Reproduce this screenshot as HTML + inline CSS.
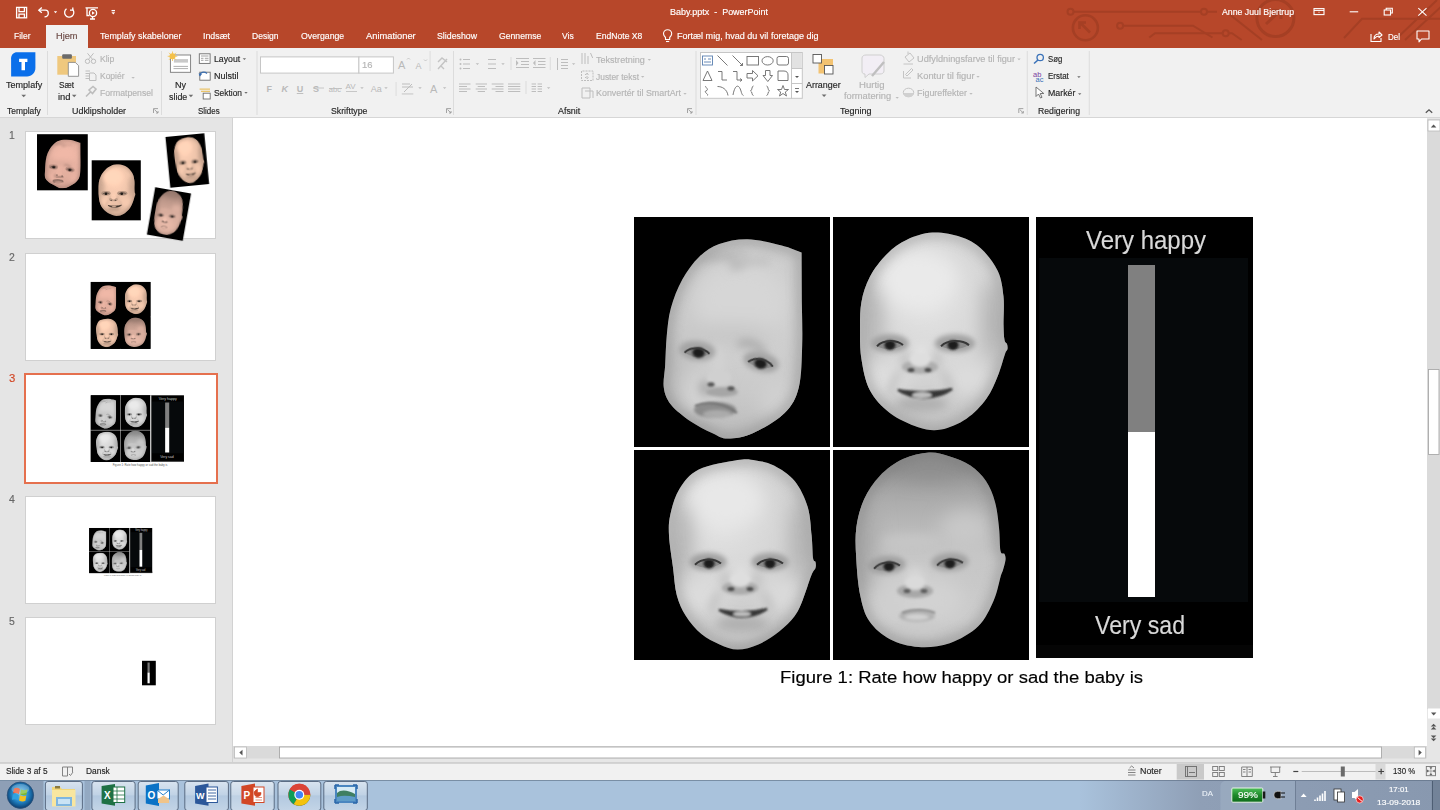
<!DOCTYPE html>
<html><head><meta charset="utf-8">
<style>
*{margin:0;padding:0;box-sizing:border-box}
html,body{width:1440px;height:810px;overflow:hidden;background:#fff;font-family:"Liberation Sans",sans-serif}
.a{position:absolute}
.t{position:absolute;white-space:nowrap;transform-origin:0 0;-webkit-text-stroke:0.15px currentColor}
svg{position:absolute;overflow:visible}
#title{left:0;top:0;width:1440px;height:48px;background:#B7472A}
#ribbon{left:0;top:48px;width:1440px;height:69px;background:#F1F1F1}
#rbline{left:0;top:117px;width:1440px;height:1px;background:#D6D6D6}
#pane{left:0;top:118px;width:232px;height:645px;background:#E5E5E5}
#pane2{left:232px;top:118px;width:1px;height:645px;background:#D2D2D2}
#stage{left:233px;top:118px;width:1194px;height:628px;background:#fff}
#vscroll{left:1427px;top:118px;width:13px;height:645px;background:#E6E6E6}
#hscroll{left:233px;top:746px;width:1194px;height:17px;background:#E6E6E6}
#status{left:0;top:763px;width:1440px;height:17px;background:#F1F1F1;border-top:1px solid #D4D4D4}
#taskbar{left:0;top:780px;width:1440px;height:30px;background:linear-gradient(90deg,#A9C2DC 0,#A9C2DC 1080px,#8F9FB6 1200px,#8898AF 1440px)}
.thumb{position:absolute;background:#fff;border:1px solid #D0D0D0}
.blk{position:absolute;background:#000}
.sep{position:absolute;width:1px;background:#DADADA}
.tbtn{position:absolute;top:781px;height:29px;border:1px solid rgba(60,80,110,.55);border-radius:3px;background:linear-gradient(180deg,rgba(255,255,255,.55),rgba(255,255,255,.15) 50%,rgba(255,255,255,.05) 51%,rgba(255,255,255,.25))}
.arr{position:absolute;width:0;height:0;border-left:2.5px solid transparent;border-right:2.5px solid transparent;border-top:3px solid #777}
</style></head><body>
<div id="title" class="a"></div>
<div id="ribbon" class="a"></div>
<div id="rbline" class="a"></div>
<div id="pane" class="a"></div>
<div id="pane2" class="a"></div>
<div id="stage" class="a"></div>
<div id="vscroll" class="a"></div>
<div id="hscroll" class="a"></div>
<div id="status" class="a"></div>
<div id="taskbar" class="a"></div>
<!-- hjem tab -->
<div class="a" style="left:46px;top:25px;width:42px;height:23px;background:#F1F1F1"></div>
<!-- thumbnails -->
<div class="thumb" style="left:25px;top:131px;width:191px;height:108px"></div>
<div class="thumb" style="left:25px;top:253px;width:191px;height:108px"></div>
<div class="a" style="left:24px;top:373px;width:194px;height:111px;border:2px solid #E5704E;background:#fff"></div>
<div class="thumb" style="left:25px;top:496px;width:191px;height:108px"></div>
<div class="thumb" style="left:25px;top:617px;width:191px;height:108px"></div>
<svg width="1440" height="810" style="left:0;top:0" viewBox="0 0 1440 810">
<!-- circuit decoration -->
<g stroke="#A53F24" stroke-width="2" fill="none">
<path d="M1073.5 11.8H1201M1207 11.8H1217"/>
<circle cx="1070.5" cy="11.8" r="3"/><circle cx="1204" cy="11.8" r="3"/>
<path d="M1229 13.9L1262 40"/>
<circle cx="1085.4" cy="27.8" r="12.5" stroke-width="2.6"/>
<path d="M1090 32.5L1080.5 23M1079.5 29V22.5H1086" stroke-width="2.6"/>
<path d="M1123 25.7H1193L1212.5 37.5"/>
<circle cx="1120.1" cy="25.7" r="3"/>
<path d="M1149.3 37.5L1155 33.3H1222.7M1228.7 33.3H1232L1241.7 40"/>
<circle cx="1225.7" cy="33.3" r="3"/>
<circle cx="1275.4" cy="18" r="18.5" stroke-width="3"/>
<path d="M1266 24L1280 11M1272 10.5H1281V19" stroke-width="3"/>
<path d="M1344 38L1362 18.75H1440"/>
<path d="M1395 40L1437 0M1405 40L1444 4"/>
</g>
<!-- QAT -->
<g stroke="#FFFFFF" stroke-width="1.3" fill="none">
<rect x="16.6" y="7.4" width="10" height="10.4"/>
<path d="M19 7.4V11.6H24.4V7.4M19 17.8V14.2H24.4V17.8"/>
<path d="M39 10.2H45.5C47.5 10.2 48.3 11.7 48.3 13.3C48.3 15 47.3 16.8 44.5 16.8"/>
<path d="M41.8 7.6L38.8 10.2L41.8 12.8"/>
<path d="M66.5 8.8A4.6 4.6 0 1 0 72.8 9.6"/>
<path d="M72.8 7.4V10.2H70"/>
<path d="M85.5 7.8H98M87 8.5V15.5H89.5M90 19H95M92.5 16.5V19"/>
<circle cx="93" cy="13" r="3.6"/>
<path d="M111.5 10.6H115"/>
</g>
<path d="M92 11.3L94.8 13L92 14.7Z" fill="#fff"/>
<path d="M53.8 11.3H57.2L55.5 13.3Z M111.4 12.2H115.2L113.3 14.4Z" fill="#fff"/>
<!-- window controls -->
<g stroke="#FFFFFF" stroke-width="1.1" fill="none">
<rect x="1314" y="8.6" width="10" height="6"/>
<path d="M1314 10.4H1324"/>
<path d="M1349.7 11.8H1358.2"/>
<rect x="1384.2" y="10" width="6.3" height="5"/>
<path d="M1386.2 10V8.2H1392.3V13H1390.5"/>
<path d="M1418.3 8.2L1426.5 15.6M1426.5 8.2L1418.3 15.6"/>
<path d="M1371 34V41.5H1381V38"/>
<path d="M1374 39C1374 35 1376 34 1379 34V32L1382 35L1379 37.5V36C1377 36 1375.5 37 1374 39Z" stroke-linejoin="round"/>
<path d="M1417 31H1429V39H1421.5L1419 41.8V39H1417Z" stroke-linejoin="round"/>
</g>
<path d="M1318 12.5L1319 11.4L1320 12.5Z" fill="#fff"/>
<!-- lightbulb -->
<g stroke="#FFFFFF" stroke-width="1.1" fill="none">
<path d="M665.5 39.5V37.5C664 36 663.5 35 663.5 33.8A4.1 4.1 0 0 1 671.7 33.8C671.7 35 671.2 36 669.7 37.5V39.5Z"/>
<path d="M666 41.5H669.2"/>
</g>
<!-- collapse ribbon chevron -->
<path d="M1425.8 112.8L1429 109.8L1432.2 112.8" stroke="#555" stroke-width="1.3" fill="none"/>

<!-- ===== RIBBON ===== -->
<!-- separators -->
<g fill="#DCDCDC">
<rect x="47" y="51" width="1" height="64"/>
<rect x="161" y="51" width="1" height="64"/>
<rect x="256.5" y="51" width="1" height="64"/>
<rect x="453" y="51" width="1" height="64"/>
<rect x="695.5" y="51" width="1" height="64"/>
<rect x="1026.8" y="51" width="1" height="64"/>
<rect x="1088.8" y="51" width="1" height="64"/>
</g>
<!-- templafy -->
<path d="M17 52.2H35.4V68C35.4 72.8 31.7 76.5 27 76.5H11.1V58.2C11.1 54.8 13.7 52.2 17 52.2Z" fill="#0A6FEA"/>
<path d="M19.1 58.8H27.4V61.9H25V70.2H21.5V61.9H19.1Z" fill="#fff"/>
<!-- arrows (dropdown) -->
<g fill="#6E6E6E">
<path d="M21.3 94.8H26.1L23.7 97.2Z"/>
<path d="M71.9 94.8H76.5L74.2 97.2Z"/>
<path d="M188.6 94.8H193.2L190.9 97.2Z"/>
<path d="M242.7 58.2H246.1L244.4 60Z"/>
<path d="M244.3 92H247.7L246 93.8Z"/>
<path d="M821.7 94.5H826.5L824.1 96.9Z"/>
<path d="M1077.2 76.3H1080.6L1078.9 78.1Z"/>
<path d="M1078 93.3H1081.4L1079.7 95.1Z"/>
</g>
<g fill="#BDBDBD">
<path d="M131.4 77H134.8L133.1 78.8Z"/>
<path d="M352 64.5H355.4L353.7 66.3Z"/>
<path d="M386.3 64.5H389.7L388 66.3Z"/>
<path d="M360.3 87.3H363.7L362 89.1Z"/>
<path d="M384.3 87.3H387.7L386 89.1Z"/>
<path d="M418.3 87.3H421.7L420 89.1Z"/>
<path d="M442.9 87.3H446.3L444.6 89.1Z"/>
<path d="M475.7 63.3H479.1L477.4 65.1Z"/>
<path d="M501.3 63.3H504.7L503 65.1Z"/>
<path d="M571.9 63.3H575.3L573.6 65.1Z"/>
<path d="M546.9 87.3H550.3L548.6 89.1Z"/>
<path d="M647.6 59H651L649.3 60.8Z"/>
<path d="M641 76H644.4L642.7 77.8Z"/>
<path d="M683.3 93H686.7L685 94.8Z"/>
<path d="M895.5 97H898.9L897.2 98.8Z"/>
<path d="M1017.3 58.5H1020.7L1019 60.3Z"/>
<path d="M976.3 76H979.7L978 77.8Z"/>
<path d="M969.3 93H972.7L971 94.8Z"/>
</g>
<!-- paste -->
<rect x="57.3" y="56" width="18.7" height="18.7" fill="#EFC87E"/>
<rect x="62.2" y="54.3" width="9.7" height="4.5" rx="1" fill="#6B6B6B"/>
<path d="M68.3 62.4H75.3L78.6 65.7V76.3H68.3Z" fill="#fff" stroke="#8A8A8A" stroke-width=".9"/>
<!-- scissors, copy, painter (disabled) -->
<g stroke="#BDBDBD" stroke-width="1" fill="none">
<circle cx="87.5" cy="61.3" r="2.2"/><circle cx="93.5" cy="61.3" r="2.2"/>
<path d="M88.5 59.3L93.5 53.3M92.5 59.3L87.5 53.3"/>
<path d="M85.5 71H90M85.5 73.5H89M85.5 76H89M85.5 78.5H89"/>
<path d="M89.5 73H94L96 75V80.5H89.5Z"/>
<path d="M86 96.5L90.5 92M89 90L92.5 93.5L96 89L93 86.5Z" stroke-width="1.6"/>
</g>
<!-- dialog launchers -->
<g stroke="#9A9A9A" stroke-width=".9" fill="none">
<path d="M153.5 113V108.6H158M154.5 109.6L158 113M156 113H158V111"/>
<path d="M446.5 113V108.6H451M447.5 109.6L451 113M449 113H451V111"/>
<path d="M687.5 113V108.6H692M688.5 109.6L692 113M690 113H692V111"/>
<path d="M1018.8 113V108.6H1023.3M1019.8 109.6L1023.3 113M1021.3 113H1023.3V111"/>
</g>
<!-- ny slide -->
<rect x="170.4" y="55" width="20.2" height="17.3" fill="#fff" stroke="#7A7A7A" stroke-width=".9"/>
<rect x="173.9" y="59.1" width="14.1" height="3.5" fill="#C9C9C9"/>
<path d="M173.5 66.4H188M173.5 68.6H188" stroke="#9A9A9A" stroke-width=".8"/>
<circle cx="172.5" cy="56.3" r="3" fill="#F4C14A"/>
<path d="M172.5 51.5V61M167.7 56.3H177.3M169 52.8L176 59.8M176 52.8L169 59.8" stroke="#F4C14A" stroke-width=".8"/>
<!-- layout/nulstil/sektion -->
<g stroke="#6E6E6E" stroke-width=".9" fill="none">
<rect x="199.3" y="53.8" width="10.8" height="9.6" fill="#fff"/>
<path d="M201 56H208.5M201 58.3H203.5M204.8 58.3H208.5M201 60.3H203.5M204.8 60.3H208.5" stroke="#999"/>
<rect x="199.8" y="72.2" width="10.4" height="8" fill="#fff"/>
<rect x="203.2" y="93.2" width="7" height="5.8" fill="#fff"/>
</g>
<path d="M199.5 75.5C200 72.5 204 71 207 73.5" stroke="#3C6FB0" stroke-width="1.3" fill="none"/>
<path d="M198.5 73.5L200 76.5L202 74Z" fill="#3C6FB0"/>
<path d="M199.6 89.2H210M201 91.3H210" stroke="#EAC46A" stroke-width="1.2"/>
<!-- font boxes -->
<rect x="260.5" y="56.9" width="98.4" height="16.2" fill="#fff" stroke="#C6C6C6" stroke-width="1"/>
<rect x="358.9" y="56.9" width="34.5" height="16.2" fill="#fff" stroke="#C6C6C6" stroke-width="1"/>
<g fill="#B9B9B9" font-family="Liberation Sans" >
<text x="398" y="69" font-size="11">A</text>
<text x="415.4" y="69" font-size="9">A</text>
<text x="266.6" y="92" font-size="9" font-weight="bold">F</text>
<text x="281.5" y="92" font-size="9" font-weight="bold" font-style="italic">K</text>
<text x="296.8" y="92" font-size="9" font-weight="bold" text-decoration="underline">U</text>
<text x="313" y="92" font-size="9" font-weight="bold">S</text>
<text x="328.8" y="91.5" font-size="7.5">abc</text>
<text x="345.4" y="89" font-size="8">AV</text>
<text x="370.7" y="92" font-size="9">Aa</text>
<text x="430" y="93" font-size="11">A</text>
</g>
<path d="M407 59.5L408.5 58L410 59.5M424 59.5L425.5 61L427 59.5M313 88H324M329 88.5H342M346 91.5H357" stroke="#BDBDBD" stroke-width=".8" fill="none"/>
<rect x="429.6" y="51" width="1" height="20" fill="#DCDCDC"/>
<rect x="395.6" y="82" width="1" height="14" fill="#DCDCDC"/>
<path d="M438 69L447 59M441 66L444 69M438 62L442 58L447 62" stroke="#C4C4C4" stroke-width="1.4" fill="none"/>
<path d="M402 84L410 84M402 87L413 87M404 92L412 84" stroke="#BDBDBD" stroke-width="1" fill="none"/>
<rect x="401.8" y="93" width="11.5" height="1.8" fill="#D8D8D8"/>
<!-- paragraph -->
<g stroke="#BDBDBD" stroke-width="1" fill="none">
<path d="M463 59.5H470M463 64H470M463 68.5H470"/>
<path d="M488 59.5H496M488 64H496M488 68.5H496"/>
<path d="M516 58.5H529M521 61.5H529M521 64.5H529M516 67.5H529"/>
<path d="M533 58.5H545.5M538 61.5H545.5M538 64.5H545.5M533 67.5H545.5"/>
<path d="M561 59.5H568M561 62.5H568M561 65.5H568M561 68.5H568M557.5 58V70"/>
<path d="M459 84H470.5M459 86.5H467M459 89H470.5M459 91.5H467"/>
<path d="M475.7 84H487M477.7 86.5H485M475.7 89H487M477.7 91.5H485"/>
<path d="M491.7 84H503.5M495.5 86.5H503.5M491.7 89H503.5M495.5 91.5H503.5"/>
<path d="M508 84H520.3M508 86.5H520.3M508 89H520.3M508 91.5H520.3"/>
<path d="M531.6 84H536M531.6 86.5H536M531.6 89H536M531.6 91.5H536M537.6 84H542M537.6 86.5H542M537.6 89H542M537.6 91.5H542"/>
<path d="M582 53V64M585 53V64M588 56V64M590.5 53L592.7 58"/>
<path d="M581.5 71V80.5H593V71H581.5M587 73V79M585 75L587 73L589 75M585 77L587 79L589 77" stroke-dasharray="2 1"/>
<path d="M582 88H590V98H582ZM585 91H593V98"/>
</g>
<g fill="#BDBDBD"><circle cx="460.5" cy="59.5" r="1"/><circle cx="460.5" cy="64" r="1"/><circle cx="460.5" cy="68.5" r="1"/></g>
<path d="M516 60L518.5 63L516 66Z M535.5 60L533 63L535.5 66Z" fill="#BDBDBD"/>
<rect x="510.5" y="57" width="1" height="13" fill="#DCDCDC"/>
<rect x="549.8" y="57" width="1" height="13" fill="#DCDCDC"/>
<rect x="525.5" y="81" width="1" height="13" fill="#DCDCDC"/>
<!-- shapes gallery -->
<rect x="700.5" y="52.5" width="91" height="45.8" fill="#fff" stroke="#C6C6C6"/>
<rect x="791.5" y="52.5" width="10.8" height="45.8" fill="#fff" stroke="#C6C6C6"/>
<rect x="792" y="53" width="9.8" height="15.2" fill="#E2E2E2"/>
<path d="M791.5 68.5H802.3M791.5 83.5H802.3" stroke="#C6C6C6"/>
<path d="M795 76H799L797 78Z M795 91H799L797 93Z" fill="#555"/>
<path d="M795 88.5H799" stroke="#555" stroke-width=".8"/>
<g stroke="#6A6A6A" stroke-width=".9" fill="none">
<rect x="702.5" y="56" width="10" height="9" stroke="#5A7FB0"/>
<path d="M704 59H706M708 59H711M704 62H711" stroke="#5A7FB0"/>
<path d="M717.5 55.5L727.5 65.5"/>
<path d="M732.5 55.5L742.5 65.5M740 65.5H742.5V63"/>
<rect x="747" y="56.5" width="11.5" height="8.5"/>
<ellipse cx="767.6" cy="60.8" rx="5.6" ry="4.2"/>
<rect x="777" y="56.5" width="11.5" height="8.5" rx="2"/>
<path d="M703 80.5L707.5 71L712 80.5Z"/>
<path d="M718 71.5H722V80H727"/>
<path d="M733 71.5H737V80H742M740 78.5L742 80L740 81.5"/>
<path d="M747 73.5H752.5V70.5L758 75.8L752.5 81V78H747Z"/>
<path d="M765.5 70.5H770V75.5H772.5L767.8 81.5L763 75.5H765.5Z"/>
<path d="M778 71H784C787 71 788 73 788 75V80.5H778Z"/>
<path d="M706 86C704 87 710 89 706 91C703 92 709 94 707.5 95.5"/>
<path d="M717.5 86.5C722 86.5 727 89 728 95.5"/>
<path d="M733 95C735 84 739 84 741 91C742 95 743 95.5 743.5 95.5"/>
<path d="M753.5 86C751.5 86 752.5 90 750.5 91C752.5 91.5 751.5 95.5 753.5 95.5"/>
<path d="M766.5 86C768.5 86 767.5 90 769.5 91C767.5 91.5 768.5 95.5 766.5 95.5"/>
<path d="M783 85.5L784.5 89.5H788.5L785.3 92L786.5 96L783 93.5L779.5 96L780.7 92L777.5 89.5H781.5Z"/>
</g>
<!-- arranger -->
<rect x="818.5" y="59" width="14.5" height="14.5" fill="#F3C372"/>
<rect x="813" y="54.5" width="8.5" height="8.5" fill="#fff" stroke="#555" stroke-width=".9"/>
<rect x="824.5" y="65.5" width="8.5" height="8.5" fill="#fff" stroke="#555" stroke-width=".9"/>
<!-- hurtig formatering -->
<path d="M862 58C862 56 864 55 866 55H880C882 55 884 56.5 884 58.5V71C884 73 882 74 880 74H869L865 77.5V74C863 74 862 73 862 71Z" fill="#F2EEF5" stroke="#CFCFCF" stroke-width="1"/>
<path d="M872 76L884 62" stroke="#BFBFBF" stroke-width="2.4"/>
<!-- udfyldning / kontur / effekter -->
<g stroke="#C4C4C4" stroke-width="1" fill="none">
<path d="M905 57L910 53L914 58L909 62Z M908 54V51.5"/>
<path d="M903.5 64H913"/>
<path d="M903.5 71V78H911M907 76L913 70L911.5 68.5L905.5 74.5Z"/>
<ellipse cx="908.5" cy="92.5" rx="5.2" ry="4.3"/>
</g>
<path d="M903.5 93C903.5 96 906 97 908.5 97C911 97 913.7 96 913.7 93Z" fill="#D0D0D0"/>
<!-- søg / erstat / markér -->
<circle cx="1040.2" cy="57.5" r="3.2" fill="none" stroke="#3B73B9" stroke-width="1.3"/>
<path d="M1038 60L1034 63.5" stroke="#3B73B9" stroke-width="1.6"/>
<text x="1033" y="77" font-family="Liberation Sans" font-size="7.5" fill="#7A3FA0">ab</text>
<text x="1035.5" y="82" font-family="Liberation Sans" font-size="7.5" fill="#3B73B9">ac</text>
<path d="M1036 87V96.5L1038.5 94L1040.5 98L1042 97.3L1040.2 93.5H1043.8Z" fill="#fff" stroke="#666" stroke-width=".9" stroke-linejoin="round"/>

<!-- ===== SCROLLBARS ===== -->
<rect x="1427" y="119" width="13" height="590" fill="#DADADA"/>
<rect x="1428" y="120" width="12" height="11" fill="#fff" stroke="#B8B8B8" stroke-width=".8"/>
<path d="M1430.8 127.5H1436.4L1433.6 124.5Z" fill="#555"/>
<rect x="1428.5" y="369.5" width="10.5" height="85" fill="#fff" stroke="#A8A8A8" stroke-width=".9"/>
<rect x="1428" y="708.5" width="12" height="10" fill="#fff"/>
<path d="M1431 712.5H1436.4L1433.7 715.5Z" fill="#555"/>
<path d="M1430.8 726.5L1433.6 723.8L1436.4 726.5ZM1430.8 729.5L1433.6 726.8L1436.4 729.5Z M1430.8 735.5L1433.6 738.2L1436.4 735.5ZM1430.8 738.5L1433.6 741.2L1436.4 738.5Z" fill="#555"/>
<rect x="233" y="746" width="1194" height="13" fill="#DADADA"/>
<rect x="233" y="758.5" width="1194" height="4" fill="#E6E6E6"/>
<rect x="234.5" y="747" width="12" height="11" fill="#fff" stroke="#B8B8B8" stroke-width=".8"/>
<path d="M242.5 749.8V755.4L239.3 752.6Z" fill="#555"/>
<rect x="279.5" y="747" width="1102" height="11" fill="#fff" stroke="#A8A8A8" stroke-width=".9"/>
<rect x="1414.3" y="747" width="11.2" height="11" fill="#fff" stroke="#B8B8B8" stroke-width=".8"/>
<path d="M1418.6 749.8V755.4L1421.8 752.6Z" fill="#555"/>
<rect x="0" y="762" width="1440" height="1" fill="#D0D0D0"/>

<!-- ===== STATUS BAR ===== -->
<g stroke="#777" stroke-width=".9" fill="none">
<path d="M62.5 767V776H67.5V767ZM67.5 767H72.5V772M69 774L70.5 775.5L73 772"/>
<path d="M1128 770H1135.5M1128 772.5H1135.5M1128 775H1135.5M1129.5 768L1131.7 766L1134 768"/>
<rect x="1185.5" y="766.5" width="11" height="10"/>
<path d="M1187.5 766.5V776.5M1189 772.5H1195"/>
<rect x="1212.7" y="766.5" width="5" height="4"/><rect x="1219.3" y="766.5" width="5" height="4"/>
<rect x="1212.7" y="772.5" width="5" height="4"/><rect x="1219.3" y="772.5" width="5" height="4"/>
<path d="M1241.7 767H1252.3V776.5H1241.7ZM1247 767V776.5M1243 769.5H1245.5M1243 772H1245.5M1248.5 769.5H1251M1248.5 772H1251"/>
<path d="M1270 767H1280.7M1271 767V772.5H1279.7V767M1275.3 772.5V776.5M1273 776.5H1277.6"/>
<path d="M1293.3 771.5H1298.3" stroke="#444" stroke-width="1.2"/>
<path d="M1301.7 771.5H1376.7" stroke="#B5B5B5"/>
<rect x="1426.3" y="766.5" width="9.2" height="9.2"/>
<path d="M1430.9 766.5V775.7M1426.3 771.1H1435.5" stroke-width=".5"/>
</g>
<path d="M1427 769.6L1429.2 771.1L1427 772.6ZM1434.8 769.6L1432.6 771.1L1434.8 772.6ZM1429.4 767.2L1430.9 769.3L1432.4 767.2ZM1429.4 775L1430.9 772.9L1432.4 775Z" fill="#666"/>
<rect x="1176.7" y="764" width="27.3" height="15.6" fill="#C9C9C9"/>
<g stroke="#6A6A6A" stroke-width=".9" fill="none">
<rect x="1185.5" y="766.5" width="11" height="10"/>
<path d="M1187.5 766.5V776.5M1189 772.5H1195"/>
</g>
<rect x="1375.5" y="764" width="10" height="15.6" fill="#D9D9D9"/>
<path d="M1378.3 771.5H1384M1381.15 768.7V774.3" stroke="#444" stroke-width="1.2"/>
<rect x="1340.8" y="766.5" width="4" height="10" fill="#6A6A6A"/>
</svg>

<svg width="1440" height="810" style="left:0;top:0" viewBox="0 0 1440 810">
<defs>
<filter id="b05" x="-50%" y="-50%" width="200%" height="200%"><feGaussianBlur stdDeviation=".6"/></filter>
<filter id="b1" x="-50%" y="-50%" width="200%" height="200%"><feGaussianBlur stdDeviation="1"/></filter>
<filter id="b15" x="-50%" y="-50%" width="200%" height="200%"><feGaussianBlur stdDeviation="1.6"/></filter>
<filter id="b2" x="-50%" y="-50%" width="200%" height="200%"><feGaussianBlur stdDeviation="2.5"/></filter>
<filter id="b4" x="-50%" y="-50%" width="200%" height="200%"><feGaussianBlur stdDeviation="5"/></filter>
<filter id="b8" x="-50%" y="-50%" width="200%" height="200%"><feGaussianBlur stdDeviation="9"/></filter>
<filter id="e6" x="-20%" y="-20%" width="140%" height="140%"><feGaussianBlur stdDeviation="6"/></filter>

<radialGradient id="g1" cx="0.6" cy="0.40" r="0.7"><stop offset="0" stop-color="#D6D6D6"/><stop offset="0.5" stop-color="#CACACA"/><stop offset="0.8" stop-color="#BEBEBE"/><stop offset="1" stop-color="#A0A0A0"/></radialGradient>
<radialGradient id="g2" cx="0.48" cy="0.35" r="0.7"><stop offset="0" stop-color="#E4E4E4"/><stop offset="0.45" stop-color="#D6D6D6"/><stop offset="0.8" stop-color="#C4C4C4"/><stop offset="1" stop-color="#9A9A9A"/></radialGradient>
<radialGradient id="g3" cx="0.45" cy="0.35" r="0.7"><stop offset="0" stop-color="#E2E2E2"/><stop offset="0.45" stop-color="#D4D4D4"/><stop offset="0.8" stop-color="#C6C6C6"/><stop offset="1" stop-color="#9C9C9C"/></radialGradient>
<linearGradient id="g4" x1="0" y1="0" x2="0" y2="1">
<stop offset="0" stop-color="#8C8C8C"/><stop offset="0.25" stop-color="#ADADAD"/><stop offset="0.5" stop-color="#C6C6C6"/><stop offset="0.8" stop-color="#CBCBCB"/><stop offset="1" stop-color="#BBBBBB"/>
</linearGradient>
<clipPath id="c1"><path d="M801.6 252.5C798.3 251.3 790.7 247.6 781.7 245.4C772.7 243.2 758.0 239.4 747.6 239.2C737.2 239.0 727.2 241.1 719.2 244.0C711.2 246.9 705.4 250.9 699.3 256.8C693.1 262.7 687.0 271.0 682.3 279.5C677.6 288.0 673.5 298.4 670.9 307.9C668.3 317.4 667.6 326.8 666.7 336.3C665.8 345.8 665.7 356.2 665.2 364.7C664.8 373.2 662.9 380.9 663.8 387.5C664.7 394.1 666.4 398.8 670.9 404.5C675.4 410.2 683.9 416.8 690.8 421.5C697.6 426.2 705.8 430.1 712.0 433.0C718.2 435.9 720.9 438.6 727.8 438.6C734.6 438.6 743.8 437.3 753.3 433.0C762.8 428.7 777.0 420.6 784.6 413.0C792.2 405.4 795.9 398.9 798.8 387.5C801.7 376.1 801.7 359.4 802.2 344.8C802.7 330.2 801.9 307.5 801.8 300.0Z"/></clipPath>
<clipPath id="c2"><path d="M932.4 232.6C941.4 232.1 952.8 234.3 960.8 236.9C968.8 239.5 974.5 242.6 980.7 248.2C986.9 253.9 994.0 263.0 997.8 271.0C1001.6 279.0 1002.5 287.5 1003.5 296.5C1004.5 305.5 1003.3 317.8 1003.5 325.0C1003.7 332.2 1003.9 336.8 1004.5 340.0C1005.1 343.2 1006.5 342.5 1007.0 344.0C1007.5 345.5 1007.8 347.3 1007.5 349.0C1007.2 350.7 1006.6 349.5 1005.0 354.0C1003.4 358.5 1000.9 368.6 997.8 376.1C994.7 383.6 991.6 391.7 986.4 398.8C981.2 405.9 974.1 413.6 966.5 418.7C958.9 423.8 949.0 428.1 941.0 429.5C933.0 430.9 926.7 429.9 918.2 427.2C909.7 424.4 897.8 419.1 889.8 413.0C881.8 406.9 874.6 399.3 869.9 390.3C865.2 381.3 863.0 368.9 861.4 359.0C859.8 349.1 860.0 340.1 860.0 330.6C860.0 321.1 859.8 311.2 861.4 302.2C863.0 293.2 865.6 284.8 869.9 276.7C874.2 268.6 880.8 260.1 887.0 253.9C893.2 247.7 899.3 243.2 906.9 239.7C914.5 236.1 923.4 233.1 932.4 232.6Z"/></clipPath>
<clipPath id="c3"><path d="M737.7 459.9C747.2 458.4 749.9 459.4 755.9 460.4C761.9 461.3 767.5 462.2 774.0 465.6C780.5 469.1 789.1 474.2 794.7 481.1C800.3 488.0 804.9 497.9 807.7 507.0C810.5 516.1 810.7 527.1 811.6 535.6C812.5 544.1 812.4 553.6 813.0 558.0C813.6 562.4 815.1 560.3 815.5 562.0C815.9 563.7 816.2 565.8 815.5 568.0C814.8 570.2 813.7 569.6 811.5 575.0C809.3 580.4 805.3 593.6 802.5 600.4C799.7 607.2 798.6 610.7 794.7 615.9C790.8 621.1 785.2 626.7 779.2 631.5C773.2 636.3 765.3 641.5 758.4 644.5C751.5 647.5 744.2 649.6 737.7 649.6C731.2 649.6 725.7 647.1 719.6 644.5C713.5 641.9 707.0 638.9 701.4 634.1C695.8 629.4 690.0 622.5 685.9 616.0C681.8 609.5 679.0 603.4 676.8 595.2C674.6 587.0 674.2 576.6 672.9 566.7C671.6 556.8 669.4 544.2 669.0 535.6C668.6 527.0 668.6 522.6 670.3 514.8C672.0 507.0 674.6 496.5 679.4 488.9C684.1 481.3 689.1 474.2 698.8 469.4C708.5 464.6 728.2 461.4 737.7 459.9Z"/></clipPath>
<clipPath id="c4"><path d="M929.0 452.6C936.8 452.2 942.8 454.3 949.7 456.5C956.6 458.7 964.4 461.5 970.4 465.6C976.4 469.7 981.9 475.1 986.0 481.1C990.1 487.2 992.8 494.1 995.0 501.9C997.2 509.7 998.1 519.6 999.0 527.8C999.9 536.0 999.6 546.6 1000.5 551.0C1001.4 555.4 1003.7 552.5 1004.5 554.0C1005.3 555.5 1005.8 557.3 1005.5 560.0C1005.2 562.7 1003.8 567.2 1003.0 570.0C1002.2 572.8 1002.0 571.9 1000.5 577.0C999.0 582.1 997.4 592.2 993.7 600.4C990.0 608.6 985.5 619.2 978.2 626.3C970.9 633.4 959.6 639.8 949.7 643.2C939.8 646.7 928.6 647.6 918.6 647.0C908.6 646.4 898.2 643.6 890.0 639.3C881.8 635.0 874.3 628.5 869.3 621.1C864.3 613.8 862.4 605.6 860.2 595.2C858.0 584.8 856.9 570.1 856.3 558.9C855.6 547.7 855.0 537.7 856.3 527.8C857.6 517.9 860.2 507.9 864.1 499.3C868.0 490.7 873.2 482.6 879.7 475.9C886.2 469.2 894.8 463.0 903.0 459.1C911.2 455.2 921.2 453.0 929.0 452.6Z"/></clipPath>
</defs>
<g id="slide">
<rect x="634" y="217" width="619" height="443" fill="#000"/>
<rect x="1039" y="258" width="209" height="344" fill="#06090B"/>
<rect x="1036" y="645" width="217" height="13" fill="#050505"/>
<rect x="1128" y="265" width="27" height="167" fill="#808080"/>
<rect x="1128" y="432" width="27" height="165" fill="#FFFFFF"/>
<g id="face1"><rect x="634" y="217" width="196" height="230" fill="#000"/><g clip-path="url(#c1)">
<rect x="634" y="217" width="196" height="230" fill="url(#g1)"/>
<g filter="url(#b8)">
<ellipse cx="740" cy="300" rx="45" ry="35" fill="#D6D6D6"/>
<ellipse cx="695" cy="392" rx="24" ry="20" fill="#D4D4D4"/>
<ellipse cx="780" cy="398" rx="20" ry="22" fill="#D0D0D0"/>
<ellipse cx="676" cy="380" rx="8" ry="40" fill="#BDBDBD"/>
<ellipse cx="728" cy="335" rx="48" ry="12" fill="#C8C8C8"/>
<ellipse cx="745" cy="430" rx="30" ry="10" fill="#BDBDBD"/>
</g>
<g filter="url(#b4)">
<path d="M700 262C712 252 728 254 742 268" stroke="#B4B4B4" stroke-width="5" fill="none"/>
<path d="M712 262C722 254 735 252 748 256M730 270C742 262 755 260 770 262" stroke="#ABABAB" stroke-width="3" fill="none"/>
<path d="M738 345C748 340 758 344 765 354" stroke="#9A9A9A" stroke-width="5" fill="none"/>
<ellipse cx="718" cy="362" rx="8" ry="16" fill="#D2D2D2"/>
<ellipse cx="705" cy="388" rx="6" ry="8" fill="#A8A8A8"/>
</g>
<g transform="rotate(6 697 353)"><ellipse cx="697" cy="350.8" rx="18.0" ry="9.8" fill="#A4A4A4" filter="url(#b2)"/><path d="M684.5 353.8C690.8 346.6 703.2 346.6 709.5 352.6C702.0 358.2 692.0 358.2 684.5 353.8Z" fill="#8A8A8A" filter="url(#b05)"/><ellipse cx="698.5" cy="352.6" rx="6.1" ry="5.1" fill="#1A1A1A" filter="url(#b1)"/><path d="M684.5 353.8C690.8 346.6 703.2 346.6 709.5 352.6" stroke="#383838" stroke-width="2" fill="none" filter="url(#b05)"/></g><g transform="rotate(14 760.5 364)"><ellipse cx="760.5" cy="361.8" rx="18.0" ry="9.8" fill="#A4A4A4" filter="url(#b2)"/><path d="M748.0 364.8C754.2 357.6 766.8 357.6 773.0 363.6C765.5 369.2 755.5 369.2 748.0 364.8Z" fill="#8A8A8A" filter="url(#b05)"/><ellipse cx="760.5" cy="363.6" rx="6.1" ry="5.1" fill="#1A1A1A" filter="url(#b1)"/><path d="M748.0 364.8C754.2 357.6 766.8 357.6 773.0 363.6" stroke="#383838" stroke-width="2" fill="none" filter="url(#b05)"/></g>
<g filter="url(#b15)">
<ellipse cx="719" cy="378" rx="12" ry="8" fill="#D0D0D0"/>
<ellipse cx="715" cy="410" rx="21" ry="8" fill="#8C8C8C"/>
<ellipse cx="717" cy="414" rx="14" ry="4" fill="#ABABAB"/>
<ellipse cx="722" cy="392" rx="16" ry="5" fill="#A6A6A6"/>
</g>
<g filter="url(#b1)">
<ellipse cx="711" cy="384.5" rx="3.5" ry="2.2" fill="#555"/>
<ellipse cx="731" cy="388.5" rx="3.5" ry="2.2" fill="#555"/>
<path d="M695 406C708 401 725 403 737 413" stroke="#6E6E6E" stroke-width="2" fill="none"/>
</g>
<path d="M801.6 252.5C798.3 251.3 790.7 247.6 781.7 245.4C772.7 243.2 758.0 239.4 747.6 239.2C737.2 239.0 727.2 241.1 719.2 244.0C711.2 246.9 705.4 250.9 699.3 256.8C693.1 262.7 687.0 271.0 682.3 279.5C677.6 288.0 673.5 298.4 670.9 307.9C668.3 317.4 667.6 326.8 666.7 336.3C665.8 345.8 665.7 356.2 665.2 364.7C664.8 373.2 662.9 380.9 663.8 387.5C664.7 394.1 666.4 398.8 670.9 404.5C675.4 410.2 683.9 416.8 690.8 421.5C697.6 426.2 705.8 430.1 712.0 433.0C718.2 435.9 720.9 438.6 727.8 438.6C734.6 438.6 743.8 437.3 753.3 433.0C762.8 428.7 777.0 420.6 784.6 413.0C792.2 405.4 795.9 398.9 798.8 387.5C801.7 376.1 801.7 359.4 802.2 344.8C802.7 330.2 801.9 307.5 801.8 300.0Z" fill="none" stroke="#6A6A6A" stroke-width="10" opacity="0.4" filter="url(#e6)"/>
</g></g>
<g id="face2"><rect x="833" y="217" width="196" height="230" fill="#000"/><g clip-path="url(#c2)">
<rect x="833" y="217" width="196" height="230" fill="url(#g2)"/>
<g filter="url(#b8)">
<ellipse cx="918" cy="280" rx="40" ry="30" fill="#EAEAEA"/>
<ellipse cx="885" cy="378" rx="24" ry="18" fill="#DEDEDE"/>
<ellipse cx="968" cy="378" rx="24" ry="18" fill="#DCDCDC"/>
<ellipse cx="872" cy="320" rx="10" ry="40" fill="#B4B4B4"/>
<ellipse cx="992" cy="320" rx="10" ry="40" fill="#B4B4B4"/>
</g>
<g filter="url(#b4)">
<ellipse cx="921" cy="356" rx="8" ry="13" fill="#E2E2E2"/>
<ellipse cx="922" cy="404" rx="26" ry="8" fill="#B0B0B0"/>
<path d="M900 372C893 380 890 388 893 394M942 372C949 380 952 388 949 394" stroke="#B2B2B2" stroke-width="4" fill="none"/>
<ellipse cx="905" cy="360" rx="4" ry="10" fill="#C0C0C0"/>
<ellipse cx="937" cy="360" rx="4" ry="10" fill="#C0C0C0"/>
</g>
<g transform="rotate(0 890 345.5)"><ellipse cx="890" cy="343.4" rx="18.7" ry="9.1" fill="#A2A2A2" filter="url(#b2)"/><path d="M877.0 346.2C883.5 339.6 896.5 339.6 903.0 345.1C895.2 350.4 884.8 350.4 877.0 346.2Z" fill="#8A8A8A" filter="url(#b05)"/><ellipse cx="890.0" cy="345.1" rx="5.5" ry="4.8" fill="#1A1A1A" filter="url(#b1)"/><path d="M877.0 346.2C883.5 339.6 896.5 339.6 903.0 345.1" stroke="#383838" stroke-width="2" fill="none" filter="url(#b05)"/></g><g transform="rotate(0 955 345.5)"><ellipse cx="955" cy="343.4" rx="20.2" ry="9.1" fill="#A2A2A2" filter="url(#b2)"/><path d="M941.0 346.2C948.0 339.6 962.0 339.6 969.0 345.1C960.6 350.4 949.4 350.4 941.0 346.2Z" fill="#8A8A8A" filter="url(#b05)"/><ellipse cx="953.0" cy="345.1" rx="5.5" ry="4.8" fill="#1A1A1A" filter="url(#b1)"/><path d="M941.0 346.2C948.0 339.6 962.0 339.6 969.0 345.1" stroke="#383838" stroke-width="2" fill="none" filter="url(#b05)"/></g>
<g filter="url(#b15)">
<ellipse cx="920" cy="367" rx="18" ry="7" fill="#AEAEAE"/>
<ellipse cx="920" cy="360" rx="10" ry="7" fill="#DEDEDE"/>
</g>
<g filter="url(#b1)">
<ellipse cx="911" cy="370" rx="3.5" ry="2" fill="#4A4A4A"/>
<ellipse cx="928" cy="370" rx="3.5" ry="2" fill="#4A4A4A"/>
<path d="M898 390C913 400 937 400 952 389C938 393 912 393 898 390Z" fill="#333" stroke="#3A3A3A" stroke-width="2.5"/>
<ellipse cx="922" cy="395" rx="10" ry="3" fill="#BDBDBD"/>
</g>
<path d="M932.4 232.6C941.4 232.1 952.8 234.3 960.8 236.9C968.8 239.5 974.5 242.6 980.7 248.2C986.9 253.9 994.0 263.0 997.8 271.0C1001.6 279.0 1002.5 287.5 1003.5 296.5C1004.5 305.5 1003.3 317.8 1003.5 325.0C1003.7 332.2 1003.9 336.8 1004.5 340.0C1005.1 343.2 1006.5 342.5 1007.0 344.0C1007.5 345.5 1007.8 347.3 1007.5 349.0C1007.2 350.7 1006.6 349.5 1005.0 354.0C1003.4 358.5 1000.9 368.6 997.8 376.1C994.7 383.6 991.6 391.7 986.4 398.8C981.2 405.9 974.1 413.6 966.5 418.7C958.9 423.8 949.0 428.1 941.0 429.5C933.0 430.9 926.7 429.9 918.2 427.2C909.7 424.4 897.8 419.1 889.8 413.0C881.8 406.9 874.6 399.3 869.9 390.3C865.2 381.3 863.0 368.9 861.4 359.0C859.8 349.1 860.0 340.1 860.0 330.6C860.0 321.1 859.8 311.2 861.4 302.2C863.0 293.2 865.6 284.8 869.9 276.7C874.2 268.6 880.8 260.1 887.0 253.9C893.2 247.7 899.3 243.2 906.9 239.7C914.5 236.1 923.4 233.1 932.4 232.6Z" fill="none" stroke="#7A7A7A" stroke-width="10" opacity="0.4" filter="url(#e6)"/>
</g></g>
<g id="face3"><rect x="634" y="450" width="196" height="210" fill="#000"/><g clip-path="url(#c3)">
<rect x="634" y="450" width="196" height="210" fill="url(#g3)"/>
<g filter="url(#b8)">
<ellipse cx="726" cy="500" rx="38" ry="28" fill="#E8E8E8"/>
<ellipse cx="700" cy="595" rx="24" ry="18" fill="#DCDCDC"/>
<ellipse cx="782" cy="595" rx="24" ry="18" fill="#DADADA"/>
<ellipse cx="682" cy="540" rx="10" ry="40" fill="#B4B4B4"/>
<ellipse cx="800" cy="540" rx="10" ry="40" fill="#B4B4B4"/>
</g>
<g filter="url(#b4)">
<ellipse cx="741" cy="578" rx="8" ry="13" fill="#E0E0E0"/>
<ellipse cx="742" cy="624" rx="26" ry="8" fill="#B0B0B0"/>
<path d="M720 592C713 600 711 606 713 612M762 592C769 600 771 606 769 612" stroke="#B2B2B2" stroke-width="4" fill="none"/>
<ellipse cx="725" cy="580" rx="4" ry="10" fill="#C0C0C0"/>
<ellipse cx="757" cy="580" rx="4" ry="10" fill="#C0C0C0"/>
</g>
<g transform="rotate(0 708 564)"><ellipse cx="708" cy="561.9" rx="18.7" ry="9.1" fill="#A2A2A2" filter="url(#b2)"/><path d="M695.0 564.7C701.5 558.0 714.5 558.0 721.0 563.6C713.2 568.9 702.8 568.9 695.0 564.7Z" fill="#8A8A8A" filter="url(#b05)"/><ellipse cx="709.0" cy="563.6" rx="5.5" ry="4.8" fill="#1A1A1A" filter="url(#b1)"/><path d="M695.0 564.7C701.5 558.0 714.5 558.0 721.0 563.6" stroke="#383838" stroke-width="2" fill="none" filter="url(#b05)"/></g><g transform="rotate(0 770 564)"><ellipse cx="770" cy="561.9" rx="18.7" ry="9.1" fill="#A2A2A2" filter="url(#b2)"/><path d="M757.0 564.7C763.5 558.0 776.5 558.0 783.0 563.6C775.2 568.9 764.8 568.9 757.0 564.7Z" fill="#8A8A8A" filter="url(#b05)"/><ellipse cx="770.0" cy="563.6" rx="5.5" ry="4.8" fill="#1A1A1A" filter="url(#b1)"/><path d="M757.0 564.7C763.5 558.0 776.5 558.0 783.0 563.6" stroke="#383838" stroke-width="2" fill="none" filter="url(#b05)"/></g>
<g filter="url(#b15)">
<ellipse cx="740" cy="588" rx="18" ry="7" fill="#ACACAC"/>
<ellipse cx="740" cy="580" rx="10" ry="7" fill="#DEDEDE"/>
</g>
<g filter="url(#b1)">
<ellipse cx="731" cy="589" rx="3.5" ry="2" fill="#4A4A4A"/>
<ellipse cx="750" cy="589" rx="3.5" ry="2" fill="#4A4A4A"/>
<path d="M719 610C734 619 752 619 767 609C752 613 734 613 719 610Z" fill="#333" stroke="#3A3A3A" stroke-width="2.5"/>
<ellipse cx="742" cy="614" rx="9" ry="2.5" fill="#BDBDBD"/>
</g>
<path d="M737.7 459.9C747.2 458.4 749.9 459.4 755.9 460.4C761.9 461.3 767.5 462.2 774.0 465.6C780.5 469.1 789.1 474.2 794.7 481.1C800.3 488.0 804.9 497.9 807.7 507.0C810.5 516.1 810.7 527.1 811.6 535.6C812.5 544.1 812.4 553.6 813.0 558.0C813.6 562.4 815.1 560.3 815.5 562.0C815.9 563.7 816.2 565.8 815.5 568.0C814.8 570.2 813.7 569.6 811.5 575.0C809.3 580.4 805.3 593.6 802.5 600.4C799.7 607.2 798.6 610.7 794.7 615.9C790.8 621.1 785.2 626.7 779.2 631.5C773.2 636.3 765.3 641.5 758.4 644.5C751.5 647.5 744.2 649.6 737.7 649.6C731.2 649.6 725.7 647.1 719.6 644.5C713.5 641.9 707.0 638.9 701.4 634.1C695.8 629.4 690.0 622.5 685.9 616.0C681.8 609.5 679.0 603.4 676.8 595.2C674.6 587.0 674.2 576.6 672.9 566.7C671.6 556.8 669.4 544.2 669.0 535.6C668.6 527.0 668.6 522.6 670.3 514.8C672.0 507.0 674.6 496.5 679.4 488.9C684.1 481.3 689.1 474.2 698.8 469.4C708.5 464.6 728.2 461.4 737.7 459.9Z" fill="none" stroke="#7A7A7A" stroke-width="10" opacity="0.4" filter="url(#e6)"/>
</g></g>
<g id="face4"><rect x="833" y="450" width="196" height="210" fill="#000"/><g clip-path="url(#c4)">
<rect x="833" y="450" width="196" height="210" fill="url(#g4)"/>
<g filter="url(#b8)">
<ellipse cx="930" cy="466" rx="45" ry="14" fill="#8E8E8E"/>
<ellipse cx="920" cy="600" rx="45" ry="25" fill="#D2D2D2"/>
<ellipse cx="965" cy="530" rx="25" ry="20" fill="#C8C8C8"/>
<ellipse cx="885" cy="600" rx="20" ry="25" fill="#CFCFCF"/>
<ellipse cx="866" cy="540" rx="12" ry="55" fill="#ABABAB"/>
</g>
<g filter="url(#b4)">
<ellipse cx="915" cy="580" rx="9" ry="13" fill="#D8D8D8"/>
<ellipse cx="912" cy="542" rx="30" ry="7" fill="#C6C6C6"/>
<ellipse cx="917" cy="630" rx="24" ry="8" fill="#CACACA"/>
</g>
<g transform="rotate(-4 887 567)"><ellipse cx="887" cy="564.9" rx="18.7" ry="9.1" fill="#A0A0A0" filter="url(#b2)"/><path d="M874.0 567.7C880.5 561.0 893.5 561.0 900.0 566.6C892.2 571.9 881.8 571.9 874.0 567.7Z" fill="#8A8A8A" filter="url(#b05)"/><ellipse cx="889.0" cy="566.6" rx="5.5" ry="4.8" fill="#1A1A1A" filter="url(#b1)"/><path d="M874.0 567.7C880.5 561.0 893.5 561.0 900.0 566.6" stroke="#383838" stroke-width="2" fill="none" filter="url(#b05)"/></g><g transform="rotate(-3 950 564)"><ellipse cx="950" cy="561.9" rx="18.7" ry="9.1" fill="#A2A2A2" filter="url(#b2)"/><path d="M937.0 564.7C943.5 558.0 956.5 558.0 963.0 563.6C955.2 568.9 944.8 568.9 937.0 564.7Z" fill="#8A8A8A" filter="url(#b05)"/><ellipse cx="950.0" cy="563.6" rx="5.5" ry="4.8" fill="#1A1A1A" filter="url(#b1)"/><path d="M937.0 564.7C943.5 558.0 956.5 558.0 963.0 563.6" stroke="#383838" stroke-width="2" fill="none" filter="url(#b05)"/></g>
<g filter="url(#b15)">
<ellipse cx="915" cy="591" rx="18" ry="7" fill="#A8A8A8"/>
<ellipse cx="915" cy="583" rx="10" ry="7" fill="#DADADA"/>
<ellipse cx="917" cy="616" rx="18" ry="6" fill="#B2B2B2"/>
<ellipse cx="917" cy="617" rx="12" ry="3" fill="#D2D2D2"/>
</g>
<g filter="url(#b1)">
<ellipse cx="907" cy="591" rx="3.5" ry="2" fill="#5A5A5A"/>
<ellipse cx="924" cy="591" rx="3.5" ry="2" fill="#5A5A5A"/>
<path d="M902 613C912 609 926 609 935 613" stroke="#8A8A8A" stroke-width="2" fill="none"/>
</g>
<path d="M929.0 452.6C936.8 452.2 942.8 454.3 949.7 456.5C956.6 458.7 964.4 461.5 970.4 465.6C976.4 469.7 981.9 475.1 986.0 481.1C990.1 487.2 992.8 494.1 995.0 501.9C997.2 509.7 998.1 519.6 999.0 527.8C999.9 536.0 999.6 546.6 1000.5 551.0C1001.4 555.4 1003.7 552.5 1004.5 554.0C1005.3 555.5 1005.8 557.3 1005.5 560.0C1005.2 562.7 1003.8 567.2 1003.0 570.0C1002.2 572.8 1002.0 571.9 1000.5 577.0C999.0 582.1 997.4 592.2 993.7 600.4C990.0 608.6 985.5 619.2 978.2 626.3C970.9 633.4 959.6 639.8 949.7 643.2C939.8 646.7 928.6 647.6 918.6 647.0C908.6 646.4 898.2 643.6 890.0 639.3C881.8 635.0 874.3 628.5 869.3 621.1C864.3 613.8 862.4 605.6 860.2 595.2C858.0 584.8 856.9 570.1 856.3 558.9C855.6 547.7 855.0 537.7 856.3 527.8C857.6 517.9 860.2 507.9 864.1 499.3C868.0 490.7 873.2 482.6 879.7 475.9C886.2 469.2 894.8 463.0 903.0 459.1C911.2 455.2 921.2 453.0 929.0 452.6Z" fill="none" stroke="#6A6A6A" stroke-width="10" opacity="0.4" filter="url(#e6)"/>
</g></g>
<rect x="830" y="217" width="3" height="443" fill="#fff"/>
<rect x="1029" y="217" width="7" height="443" fill="#fff"/>
<rect x="634" y="447" width="395" height="3" fill="#fff"/>
<rect x="1036" y="658" width="217" height="2" fill="#fff"/>
</g>
<defs>
<radialGradient id="sk1" cx="0.55" cy="0.4" r="0.6">
<stop offset="0" stop-color="#EBC6B8"/><stop offset="0.6" stop-color="#D9A898"/><stop offset="1" stop-color="#A86E62"/>
</radialGradient>
<radialGradient id="sk2" cx="0.5" cy="0.38" r="0.6">
<stop offset="0" stop-color="#F5D8C2"/><stop offset="0.6" stop-color="#E5B9A0"/><stop offset="1" stop-color="#B98068"/>
</radialGradient>
<radialGradient id="sk4" cx="0.5" cy="0.6" r="0.6">
<stop offset="0" stop-color="#F0C9B8"/><stop offset="0.6" stop-color="#DCAE98"/><stop offset="1" stop-color="#9E7866"/>
</radialGradient>
<filter id="skinA" color-interpolation-filters="sRGB"><feColorMatrix type="matrix" values="1.12 0 0 0 0  0.86 0 0 0 0  0.78 0 0 0 0  0 0 0 1 0"/></filter>
<filter id="skinB" color-interpolation-filters="sRGB"><feColorMatrix type="matrix" values="1.12 0 0 0 0  0.92 0 0 0 0  0.80 0 0 0 0  0 0 0 1 0"/></filter>
<filter id="skinC" color-interpolation-filters="sRGB"><feColorMatrix type="matrix" values="1.1 0 0 0 0  0.88 0 0 0 0  0.80 0 0 0 0  0 0 0 1 0"/></filter>
<filter id="skinA2" color-interpolation-filters="sRGB" filterUnits="userSpaceOnUse" x="634" y="217" width="196" height="230"><feColorMatrix type="matrix" values="1.12 0 0 0 0  0.86 0 0 0 0  0.78 0 0 0 0  0 0 0 1 0"/></filter>
<filter id="skinB2" color-interpolation-filters="sRGB"><feColorMatrix type="matrix" values="1.12 0 0 0 0  0.92 0 0 0 0  0.80 0 0 0 0  0 0 0 1 0"/></filter>
<filter id="skinC2" color-interpolation-filters="sRGB"><feColorMatrix type="matrix" values="1.1 0 0 0 0  0.88 0 0 0 0  0.80 0 0 0 0  0 0 0 1 0"/></filter>
<filter id="tb" x="-50%" y="-50%" width="200%" height="200%"><feGaussianBlur stdDeviation=".5"/></filter>
</defs>
<!-- thumb 1 -->
<g filter="url(#skinA)"><use href="#face1" transform="translate(-127.2 81.25) scale(0.259 0.244)"/></g>
<g filter="url(#skinB)"><use href="#face2" transform="translate(-116.97 103.66) scale(0.2505 0.261)"/></g>
<g filter="url(#skinB)" transform="rotate(-5.5 187.3 160.5)"><use href="#face3" transform="translate(41.63 25.65) scale(0.199 0.243)"/></g>
<g filter="url(#skinC)" transform="rotate(10 169 214)"><use href="#face4" transform="translate(-4.19 86.95) scale(0.186 0.229)"/></g>
<!-- thumb 2 -->
<g transform="translate(-4.93 249.2) scale(0.151)">
<rect x="634" y="217" width="395" height="443" fill="#000"/>
<g filter="url(#skinA2)"><use href="#face1"/></g>
<g filter="url(#skinB2)"><use href="#face2"/></g>
<g filter="url(#skinB2)"><use href="#face3"/></g>
<g filter="url(#skinC2)"><use href="#face4"/></g>
</g>
<!-- thumb 3 -->
<use href="#slide" transform="translate(-4.62 362.64) scale(0.1505)"/>
<g fill="#C8C8C8" font-family="Liberation Sans">
<text x="158.8" y="400.2" font-size="3.9" textLength="18.1" lengthAdjust="spacingAndGlyphs">Very happy</text>
<text x="160.2" y="458.1" font-size="3.9" textLength="13.5" lengthAdjust="spacingAndGlyphs">Very sad</text>
</g>
<text x="112.8" y="465.6" font-size="2.6" textLength="54.7" lengthAdjust="spacingAndGlyphs" font-family="Liberation Sans" fill="#555">Figure 1: Rate how happy or sad the baby is</text>
<!-- thumb 4 -->
<use href="#slide" transform="translate(24.66 505.9) scale(0.1018)"/>
<g fill="#C8C8C8" font-family="Liberation Sans">
<text x="135.2" y="531.3" font-size="2.6" textLength="12.2" lengthAdjust="spacingAndGlyphs">Very happy</text>
<text x="136.1" y="570.5" font-size="2.6" textLength="9.2" lengthAdjust="spacingAndGlyphs">Very sad</text>
</g>
<text x="104.1" y="576.2" font-size="1.9" textLength="37" lengthAdjust="spacingAndGlyphs" font-family="Liberation Sans" fill="#555">Figure 1: Rate how happy or sad the baby is</text>
<!-- thumb 5 -->
<rect x="142" y="660.8" width="13.8" height="24.5" fill="#000"/>
<rect x="147.5" y="662.5" width="2.2" height="10" fill="#777"/>
<rect x="147.5" y="672.5" width="2.2" height="10.8" fill="#fff"/>

</svg>
<svg width="1440" height="810" style="left:0;top:0" viewBox="0 0 1440 810">
<defs>
<linearGradient id="btn" x1="0" y1="0" x2="0" y2="1">
<stop offset="0" stop-color="#fff" stop-opacity=".55"/><stop offset=".45" stop-color="#fff" stop-opacity=".28"/><stop offset=".5" stop-color="#fff" stop-opacity=".12"/><stop offset="1" stop-color="#fff" stop-opacity=".3"/>
</linearGradient>
<radialGradient id="orb" cx=".5" cy=".45" r=".55">
<stop offset="0" stop-color="#7FD0F0"/><stop offset=".6" stop-color="#1F7FC0"/><stop offset="1" stop-color="#0B3D6E"/>
</radialGradient>
<linearGradient id="batt" x1="0" y1="0" x2="0" y2="1">
<stop offset="0" stop-color="#4FC05A"/><stop offset=".5" stop-color="#1E8A2A"/><stop offset="1" stop-color="#0E6B1A"/>
</linearGradient>
<linearGradient id="tray" x1="0" y1="0" x2="0" y2="1">
<stop offset="0" stop-color="#9FB0C6"/><stop offset="1" stop-color="#8A9AB0"/>
</linearGradient>
</defs>
<rect x="0" y="780" width="1440" height="1" fill="#5A6A80" opacity=".6"/>
<rect x="0" y="781" width="43.5" height="29" fill="#8E9FB6"/>
<!-- orb -->
<circle cx="20.4" cy="795.2" r="13.2" fill="url(#orb)" stroke="#2A4F78" stroke-width=".8"/>
<path d="M14 788.5C16 787.5 18 787.5 20 789L19 794C17 792.8 15.5 792.8 13 793.5Z" fill="#E8502A"/>
<path d="M21 789.3C23 790.5 25 790.5 27.5 789.3L26.5 794.5C24.5 795.5 22.5 795.5 20 794.3Z" fill="#7DBB2E"/>
<path d="M12.8 794.6C15 793.8 17 793.8 18.9 795L18 800C16 799 14.5 799 12 799.8Z" fill="#2FA2E0"/>
<path d="M20 795.3C22.5 796.5 24.3 796.5 26.3 795.6L25.4 800.8C23.5 801.8 21.5 801.8 19 800.5Z" fill="#F5C01E"/>
<ellipse cx="20.4" cy="789" rx="9" ry="5" fill="#fff" opacity=".25"/>
<!-- buttons -->
<g stroke="#4A5B72" stroke-opacity=".85" stroke-width="1">
<rect x="45.4" y="781.5" width="37" height="29" rx="2.5" fill="url(#btn)"/>
<rect x="91.9" y="781.5" width="43.2" height="29" rx="2.5" fill="url(#btn)"/>
<rect x="138.2" y="781.5" width="40" height="29" rx="2.5" fill="url(#btn)"/>
<rect x="184.8" y="781.5" width="43.6" height="29" rx="2.5" fill="url(#btn)"/>
<rect x="230.8" y="781.5" width="43.4" height="29" rx="2.5" fill="url(#btn)" fill-opacity="1.4"/>
<rect x="278" y="781.5" width="42.8" height="29" rx="2.5" fill="url(#btn)"/>
<rect x="323.8" y="781.5" width="43.5" height="29" rx="2.5" fill="url(#btn)"/>
</g>
<rect x="231.3" y="782" width="42.4" height="28" rx="2" fill="#fff" opacity=".15"/>
<rect x="84.5" y="781" width="6" height="29" fill="#7E90A8" opacity=".5"/>
<!-- folder -->
<path d="M52 787H60L62 789H75V806H52Z" fill="#F2D77A"/>
<rect x="52" y="790" width="23.5" height="16.5" fill="#F8E6A0"/>
<rect x="56" y="797" width="16" height="9" fill="#7FB6E0"/>
<rect x="58" y="799" width="12" height="5" fill="#C9E3F5"/>
<rect x="55" y="786" width="5" height="2.5" fill="#8A7A40"/>
<!-- excel -->
<path d="M101.6 786L115 783.9V805.7L101.6 803.6Z" fill="#1E7145"/>
<rect x="113" y="787" width="11.7" height="15.5" fill="#fff" stroke="#1E7145" stroke-width="1"/>
<path d="M117 787V802.5M113 791H124.7M113 795H124.7M113 799H124.7" stroke="#1E7145" stroke-width=".8"/>
<text x="104" y="799" font-family="Liberation Sans" font-size="10" font-weight="bold" fill="#fff">X</text>
<!-- outlook -->
<path d="M145.8 785.5L159 783V806L145.8 803.5Z" fill="#0A72C6"/>
<rect x="157" y="790" width="12.5" height="9" fill="#fff" stroke="#0A72C6" stroke-width=".9"/>
<path d="M157 790L163.2 795L169.5 790" stroke="#0A72C6" stroke-width=".9" fill="none"/>
<path d="M158 799L163.5 795.5L169 799V803H158Z" fill="#F0C48A"/>
<text x="147.5" y="799" font-family="Liberation Sans" font-size="10" font-weight="bold" fill="#fff">O</text>
<!-- word -->
<path d="M195.1 786L208.5 783.6V805.8L195.1 803.4Z" fill="#2B579A"/>
<rect x="206" y="787" width="11.4" height="15.5" fill="#fff" stroke="#2B579A" stroke-width="1"/>
<path d="M208 790H216M208 793H216M208 796H216M208 799H216" stroke="#2B579A" stroke-width=".9"/>
<text x="196" y="799" font-family="Liberation Sans" font-size="9" font-weight="bold" fill="#fff">W</text>
<!-- powerpoint -->
<path d="M241.4 786L255 783.6V805.8L241.4 803.4Z" fill="#D24726"/>
<rect x="253" y="787" width="11" height="15.5" fill="#fff" stroke="#D24726" stroke-width="1"/>
<path d="M256 790A3.5 3.5 0 1 0 261 792.5H257.5V789Z M255.5 797.5H262M255.5 800H262" fill="#D24726" stroke="#D24726" stroke-width=".6"/>
<text x="243.5" y="799" font-family="Liberation Sans" font-size="10" font-weight="bold" fill="#fff">P</text>
<!-- chrome -->
<circle cx="299.3" cy="794.7" r="11" fill="#DB4437"/>
<path d="M299.3 794.7L289.8 789.2A11 11 0 0 0 293.8 804.2Z" fill="#0F9D58"/>
<path d="M299.3 794.7L293.8 804.2A11 11 0 0 0 310.3 794.7Z" fill="#0F9D58"/>
<path d="M299.3 794.7L310.3 794.7A11 11 0 0 1 293.8 804.2L299.3 794.7Z" fill="#F4C20D"/>
<path d="M299.3 794.7L289.8 789.2A11 11 0 0 1 308.8 789.2L310.3 794.7Z" fill="#DB4437"/>
<circle cx="299.3" cy="794.7" r="5" fill="#fff"/>
<circle cx="299.3" cy="794.7" r="3.8" fill="#4285F4"/>
<!-- photos -->
<rect x="335" y="785" width="22" height="18" fill="#4A86C0"/>
<rect x="337" y="787" width="18" height="14" fill="#D8ECF6"/>
<path d="M337 793C341 789 348 790 355 794V801H337Z" fill="#3F7F62"/>
<path d="M337 797C343 795 349 796 355 797V801H337Z" fill="#5E9CC8"/>
<path d="M335 785H339M335 785V789M357 785H353M357 785V789M335 803H339M335 803V799M357 803H353M357 803V799" stroke="#2A66A8" stroke-width="1.5"/>
<!-- tray -->
<path d="M1220.4 810V787C1220.4 783.5 1222 781 1226 781H1295V810Z" fill="#9BACC2" opacity=".75"/>
<rect x="1295" y="781" width="1" height="29" fill="#6F7F96"/>
<rect x="1231.8" y="788" width="31" height="14.2" rx="1" fill="url(#batt)" stroke="#E8F2E8" stroke-width="1"/>
<rect x="1262.8" y="791.5" width="2.5" height="7" fill="#1A1A1A"/>
<path d="M1277.5 791.3H1281V798.7H1277.5A3.7 3.7 0 0 1 1277.5 791.3Z" fill="#111" stroke="#eee" stroke-width=".6"/><path d="M1281 793H1285M1281 797H1285" stroke="#111" stroke-width="1.2"/>
<path d="M1300.7 797L1303.6 793.5L1306.6 797Z" fill="#fff"/>
<path d="M1315 801V799.5M1317.5 801V797.5M1320 801V795.5M1322.5 801V793.5M1325 801V791" stroke="#fff" stroke-width="1.6"/>
<rect x="1334" y="789" width="7" height="11" fill="#fff" stroke="#333" stroke-width=".8"/>
<rect x="1337.5" y="792" width="7" height="10" fill="#fff" stroke="#333" stroke-width=".8"/>
<path d="M1352 792H1354.5L1358 789V801L1354.5 798H1352Z" fill="#fff"/>
<circle cx="1359.7" cy="799.4" r="3.6" fill="#E82020" stroke="#fff" stroke-width=".6"/>
<path d="M1357.5 797.5L1362 801.3" stroke="#fff" stroke-width="1"/>
<rect x="1431.8" y="781" width="8.2" height="29" fill="#6E7E94" opacity=".8"/>
<rect x="1432" y="781" width="1" height="29" fill="#4E5E74"/>
</svg>

<span class="t" style="left:670.00px;top:8.17px;font-size:8.3px;line-height:8.3px;color:#FFFFFF;font-weight:400;font-family:'Liberation Sans',sans-serif;transform:scaleX(1.0804);">Baby.pptx&nbsp; - &nbsp;PowerPoint</span>
<span class="t" style="left:1222.00px;top:7.57px;font-size:8.3px;line-height:8.3px;color:#FFFFFF;font-weight:400;font-family:'Liberation Sans',sans-serif;transform:scaleX(1.0547);">Anne Juul Bjertrup</span>
<span class="t" style="left:1388.00px;top:32.57px;font-size:8.3px;line-height:8.3px;color:#FFFFFF;font-weight:400;font-family:'Liberation Sans',sans-serif;transform:scaleX(0.9636);">Del</span>
<span class="t" style="left:13.50px;top:31.98px;font-size:9.0px;line-height:9.0px;color:#FFFFFF;font-weight:400;font-family:'Liberation Sans',sans-serif;transform:scaleX(0.9429);">Filer</span>
<span class="t" style="left:55.50px;top:31.98px;font-size:9.0px;line-height:9.0px;color:#6B4A45;font-weight:400;font-family:'Liberation Sans',sans-serif;transform:scaleX(1.0230);">Hjem</span>
<span class="t" style="left:99.50px;top:31.98px;font-size:9.0px;line-height:9.0px;color:#FFFFFF;font-weight:400;font-family:'Liberation Sans',sans-serif;transform:scaleX(0.9873);">Templafy skabeloner</span>
<span class="t" style="left:203.00px;top:31.98px;font-size:9.0px;line-height:9.0px;color:#FFFFFF;font-weight:400;font-family:'Liberation Sans',sans-serif;transform:scaleX(0.9813);">Indsæt</span>
<span class="t" style="left:252.00px;top:31.98px;font-size:9.0px;line-height:9.0px;color:#FFFFFF;font-weight:400;font-family:'Liberation Sans',sans-serif;transform:scaleX(0.9459);">Design</span>
<span class="t" style="left:300.80px;top:31.98px;font-size:9.0px;line-height:9.0px;color:#FFFFFF;font-weight:400;font-family:'Liberation Sans',sans-serif;transform:scaleX(0.9701);">Overgange</span>
<span class="t" style="left:366.00px;top:31.98px;font-size:9.0px;line-height:9.0px;color:#FFFFFF;font-weight:400;font-family:'Liberation Sans',sans-serif;transform:scaleX(1.0347);">Animationer</span>
<span class="t" style="left:437.30px;top:31.98px;font-size:9.0px;line-height:9.0px;color:#FFFFFF;font-weight:400;font-family:'Liberation Sans',sans-serif;transform:scaleX(0.9749);">Slideshow</span>
<span class="t" style="left:498.70px;top:31.98px;font-size:9.0px;line-height:9.0px;color:#FFFFFF;font-weight:400;font-family:'Liberation Sans',sans-serif;transform:scaleX(0.9607);">Gennemse</span>
<span class="t" style="left:562.00px;top:31.98px;font-size:9.0px;line-height:9.0px;color:#FFFFFF;font-weight:400;font-family:'Liberation Sans',sans-serif;transform:scaleX(0.9478);">Vis</span>
<span class="t" style="left:595.70px;top:31.98px;font-size:9.0px;line-height:9.0px;color:#FFFFFF;font-weight:400;font-family:'Liberation Sans',sans-serif;transform:scaleX(0.9537);">EndNote X8</span>
<span class="t" style="left:676.70px;top:31.98px;font-size:9.0px;line-height:9.0px;color:#FFFFFF;font-weight:400;font-family:'Liberation Sans',sans-serif;transform:scaleX(1.0037);">Fortæl mig, hvad du vil foretage dig</span>
<span class="t" style="left:5.50px;top:81.47px;font-size:8.3px;line-height:8.3px;color:#262626;font-weight:400;font-family:'Liberation Sans',sans-serif;transform:scaleX(1.0903);">Templafy</span>
<span class="t" style="left:6.70px;top:106.97px;font-size:8.3px;line-height:8.3px;color:#262626;font-weight:400;font-family:'Liberation Sans',sans-serif;transform:scaleX(1.0180);">Templafy</span>
<span class="t" style="left:59.00px;top:80.77px;font-size:8.3px;line-height:8.3px;color:#262626;font-weight:400;font-family:'Liberation Sans',sans-serif;transform:scaleX(0.9856);">Sæt</span>
<span class="t" style="left:57.50px;top:92.67px;font-size:8.3px;line-height:8.3px;color:#262626;font-weight:400;font-family:'Liberation Sans',sans-serif;transform:scaleX(1.1283);">ind</span>
<span class="t" style="left:99.50px;top:55.27px;font-size:8.3px;line-height:8.3px;color:#B4B4B4;font-weight:400;font-family:'Liberation Sans',sans-serif;transform:scaleX(1.0330);">Klip</span>
<span class="t" style="left:99.50px;top:72.27px;font-size:8.3px;line-height:8.3px;color:#B4B4B4;font-weight:400;font-family:'Liberation Sans',sans-serif;transform:scaleX(1.0215);">Kopiér</span>
<span class="t" style="left:99.50px;top:88.97px;font-size:8.3px;line-height:8.3px;color:#B4B4B4;font-weight:400;font-family:'Liberation Sans',sans-serif;transform:scaleX(1.0447);">Formatpensel</span>
<span class="t" style="left:71.70px;top:106.97px;font-size:8.3px;line-height:8.3px;color:#262626;font-weight:400;font-family:'Liberation Sans',sans-serif;transform:scaleX(1.0759);">Udklipsholder</span>
<span class="t" style="left:174.70px;top:81.47px;font-size:8.3px;line-height:8.3px;color:#262626;font-weight:400;font-family:'Liberation Sans',sans-serif;transform:scaleX(1.0946);">Ny</span>
<span class="t" style="left:168.70px;top:92.67px;font-size:8.3px;line-height:8.3px;color:#262626;font-weight:400;font-family:'Liberation Sans',sans-serif;transform:scaleX(1.0715);">slide</span>
<span class="t" style="left:213.50px;top:54.67px;font-size:8.3px;line-height:8.3px;color:#262626;font-weight:400;font-family:'Liberation Sans',sans-serif;transform:scaleX(1.0513);">Layout</span>
<span class="t" style="left:213.50px;top:72.27px;font-size:8.3px;line-height:8.3px;color:#262626;font-weight:400;font-family:'Liberation Sans',sans-serif;transform:scaleX(1.0888);">Nulstil</span>
<span class="t" style="left:213.50px;top:89.27px;font-size:8.3px;line-height:8.3px;color:#262626;font-weight:400;font-family:'Liberation Sans',sans-serif;transform:scaleX(1.0113);">Sektion</span>
<span class="t" style="left:198.30px;top:106.97px;font-size:8.3px;line-height:8.3px;color:#262626;font-weight:400;font-family:'Liberation Sans',sans-serif;transform:scaleX(0.9598);">Slides</span>
<span class="t" style="left:362.00px;top:61.17px;font-size:8.3px;line-height:8.3px;color:#B4B4B4;font-weight:400;font-family:'Liberation Sans',sans-serif;transform:scaleX(1.1371);">16</span>
<span class="t" style="left:330.80px;top:106.97px;font-size:8.3px;line-height:8.3px;color:#262626;font-weight:400;font-family:'Liberation Sans',sans-serif;transform:scaleX(1.0522);">Skrifttype</span>
<span class="t" style="left:596.00px;top:55.77px;font-size:8.3px;line-height:8.3px;color:#B4B4B4;font-weight:400;font-family:'Liberation Sans',sans-serif;transform:scaleX(1.0909);">Tekstretning</span>
<span class="t" style="left:596.00px;top:72.87px;font-size:8.3px;line-height:8.3px;color:#B4B4B4;font-weight:400;font-family:'Liberation Sans',sans-serif;transform:scaleX(1.0136);">Juster tekst</span>
<span class="t" style="left:596.00px;top:89.27px;font-size:8.3px;line-height:8.3px;color:#B4B4B4;font-weight:400;font-family:'Liberation Sans',sans-serif;transform:scaleX(1.0717);">Konvertér til SmartArt</span>
<span class="t" style="left:557.60px;top:106.97px;font-size:8.3px;line-height:8.3px;color:#262626;font-weight:400;font-family:'Liberation Sans',sans-serif;transform:scaleX(1.0739);">Afsnit</span>
<span class="t" style="left:806.40px;top:80.97px;font-size:8.3px;line-height:8.3px;color:#262626;font-weight:400;font-family:'Liberation Sans',sans-serif;transform:scaleX(1.0718);">Arranger</span>
<span class="t" style="left:858.80px;top:80.97px;font-size:8.3px;line-height:8.3px;color:#B4B4B4;font-weight:400;font-family:'Liberation Sans',sans-serif;transform:scaleX(1.1517);">Hurtig</span>
<span class="t" style="left:844.30px;top:92.47px;font-size:8.3px;line-height:8.3px;color:#B4B4B4;font-weight:400;font-family:'Liberation Sans',sans-serif;transform:scaleX(1.1223);">formatering</span>
<span class="t" style="left:840.00px;top:106.97px;font-size:8.3px;line-height:8.3px;color:#262626;font-weight:400;font-family:'Liberation Sans',sans-serif;transform:scaleX(1.0833);">Tegning</span>
<span class="t" style="left:916.70px;top:54.77px;font-size:8.3px;line-height:8.3px;color:#B4B4B4;font-weight:400;font-family:'Liberation Sans',sans-serif;transform:scaleX(1.1068);">Udfyldningsfarve til figur</span>
<span class="t" style="left:916.70px;top:71.77px;font-size:8.3px;line-height:8.3px;color:#B4B4B4;font-weight:400;font-family:'Liberation Sans',sans-serif;transform:scaleX(1.1253);">Kontur til figur</span>
<span class="t" style="left:916.70px;top:88.97px;font-size:8.3px;line-height:8.3px;color:#B4B4B4;font-weight:400;font-family:'Liberation Sans',sans-serif;transform:scaleX(1.0746);">Figureffekter</span>
<span class="t" style="left:1047.80px;top:55.27px;font-size:8.3px;line-height:8.3px;color:#262626;font-weight:400;font-family:'Liberation Sans',sans-serif;transform:scaleX(0.9331);">Søg</span>
<span class="t" style="left:1047.80px;top:72.47px;font-size:8.3px;line-height:8.3px;color:#262626;font-weight:400;font-family:'Liberation Sans',sans-serif;transform:scaleX(0.9598);">Erstat</span>
<span class="t" style="left:1047.80px;top:89.27px;font-size:8.3px;line-height:8.3px;color:#262626;font-weight:400;font-family:'Liberation Sans',sans-serif;transform:scaleX(1.0609);">Markér</span>
<span class="t" style="left:1037.60px;top:106.97px;font-size:8.3px;line-height:8.3px;color:#262626;font-weight:400;font-family:'Liberation Sans',sans-serif;transform:scaleX(1.0463);">Redigering</span>
<span class="t" style="left:9.20px;top:130.39px;font-size:11px;line-height:11px;color:#666666;font-weight:400;font-family:'Liberation Sans',sans-serif;transform:scaleX(0.9469);">1</span>
<span class="t" style="left:9.20px;top:251.89px;font-size:11px;line-height:11px;color:#666666;font-weight:400;font-family:'Liberation Sans',sans-serif;transform:scaleX(0.9469);">2</span>
<span class="t" style="left:8.70px;top:373.19px;font-size:11px;line-height:11px;color:#D24726;font-weight:400;font-family:'Liberation Sans',sans-serif;transform:scaleX(1.0286);">3</span>
<span class="t" style="left:9.20px;top:494.39px;font-size:11px;line-height:11px;color:#666666;font-weight:400;font-family:'Liberation Sans',sans-serif;transform:scaleX(0.9469);">4</span>
<span class="t" style="left:9.20px;top:616.49px;font-size:11px;line-height:11px;color:#666666;font-weight:400;font-family:'Liberation Sans',sans-serif;transform:scaleX(0.9469);">5</span>
<span class="t" style="left:6.20px;top:767.37px;font-size:8.3px;line-height:8.3px;color:#262626;font-weight:400;font-family:'Liberation Sans',sans-serif;transform:scaleX(0.9996);">Slide 3 af 5</span>
<span class="t" style="left:85.60px;top:767.37px;font-size:8.3px;line-height:8.3px;color:#262626;font-weight:400;font-family:'Liberation Sans',sans-serif;transform:scaleX(1.0114);">Dansk</span>
<span class="t" style="left:1140.00px;top:767.37px;font-size:8.3px;line-height:8.3px;color:#262626;font-weight:400;font-family:'Liberation Sans',sans-serif;transform:scaleX(1.0691);">Noter</span>
<span class="t" style="left:1392.70px;top:767.37px;font-size:8.3px;line-height:8.3px;color:#262626;font-weight:400;font-family:'Liberation Sans',sans-serif;transform:scaleX(0.9477);">130 %</span>
<span class="t" style="left:1202.00px;top:789.83px;font-size:8.0px;line-height:8.0px;color:#E8EEF5;font-weight:400;font-family:'Liberation Sans',sans-serif;transform:scaleX(0.9798);">DA</span>
<span class="t" style="left:1238.00px;top:791.38px;font-size:9.0px;line-height:9.0px;color:#FFFFFF;font-weight:400;font-family:'Liberation Sans',sans-serif;transform:scaleX(1.1101);">99%</span>
<span class="t" style="left:1388.50px;top:786.23px;font-size:8.0px;line-height:8.0px;color:#FFFFFF;font-weight:400;font-family:'Liberation Sans',sans-serif;transform:scaleX(0.9785);">17:01</span>
<span class="t" style="left:1376.70px;top:798.83px;font-size:8.0px;line-height:8.0px;color:#FFFFFF;font-weight:400;font-family:'Liberation Sans',sans-serif;transform:scaleX(1.0581);">13-09-2018</span>
<span class="t" style="left:1086.00px;top:227.49px;font-size:26.0px;line-height:26.0px;color:#D9D9D9;font-weight:400;font-family:'Liberation Sans',sans-serif;transform:scaleX(0.9224);">Very happy</span>
<span class="t" style="left:1095.00px;top:612.49px;font-size:26.0px;line-height:26.0px;color:#D9D9D9;font-weight:400;font-family:'Liberation Sans',sans-serif;transform:scaleX(0.8896);">Very sad</span>
<span class="t" style="left:780.40px;top:669.04px;font-size:17.2px;line-height:17.2px;color:#000000;font-weight:400;font-family:'Liberation Sans',sans-serif;transform:scaleX(1.0766);">Figure 1: Rate how happy or sad the baby is</span>
</body></html>
